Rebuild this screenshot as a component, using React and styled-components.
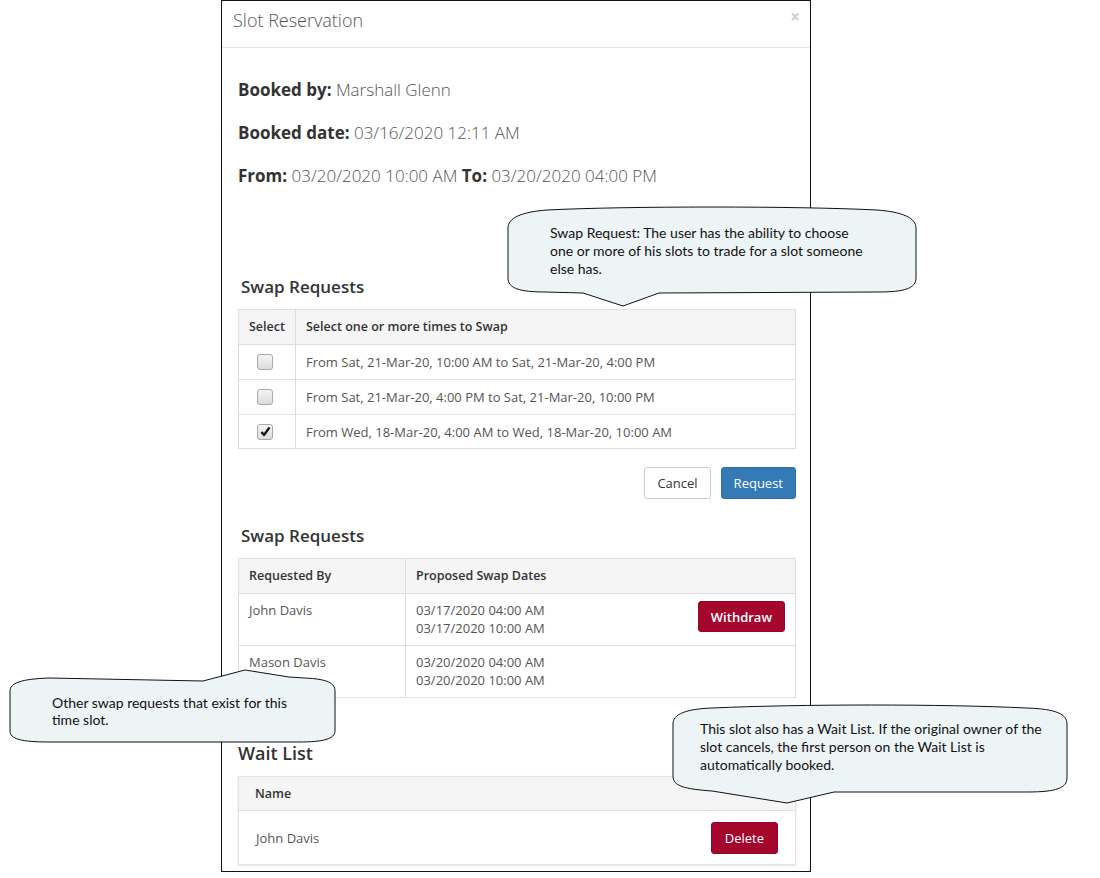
import React from "react";
import styled, { createGlobalStyle } from "styled-components";

const GlobalStyle = createGlobalStyle`
  html, body { margin: 0; padding: 0; background: #fff; }
  body { font-family: "Open Sans", "Liberation Sans", sans-serif; }
  * { box-sizing: border-box; }
`;

const Page = styled.div`
  position: relative;
  width: 1100px;
  height: 878px;
  overflow: hidden;
  background: #fff;
`;

const Modal = styled.div`
  margin-left: 221px;
  width: 590px;
  border: 1px solid #111;
  background: #fff;
`;

const Header = styled.div`
  display: flex;
  justify-content: space-between;
  align-items: flex-start;
  height: 47px;
  padding: 7px 10px 0 11px;
  border-bottom: 1px solid #e5e5e5;
`;

const Title = styled.h4`
  margin: 0;
  font-size: 18px;
  line-height: 24px;
  font-weight: 300;
  color: #555;
`;

const Close = styled.span`
  font-size: 17px;
  line-height: 1;
  font-weight: 700;
  color: #000;
  opacity: 0.2;
  margin-top: 0;
`;

const Body = styled.div`
  padding: 0 14px 6px 16px;
`;

const InfoList = styled.div`
  display: flex;
  flex-direction: column;
  gap: 21px;
  padding-top: 31px;
`;

const Info = styled.p`
  margin: 0;
  font-size: 17px;
  line-height: 22px;
  font-weight: 300;
  color: #555;
  b { font-weight: 700; color: #333; }
`;

const SectionTitle = styled.h3`
  margin: ${(p) => p.$mt}px 0 ${(p) => p.$mb || 11}px;
  padding-left: ${(p) => p.$indent || 0}px;
  font-size: ${(p) => p.$size || 17}px;
  line-height: 22px;
  font-weight: 600;
  color: #333;
`;

const DataTable = styled.div`
  border: 1px solid ${(p) => (p.$panel ? "#e3e3e3" : "#ddd")};
  box-shadow: ${(p) => (p.$panel ? "0 1px 2px rgba(0,0,0,0.12)" : "none")};
`;

const Row = styled.div`
  display: grid;
  grid-template-columns: ${(p) => p.$cols};
  min-height: ${(p) => p.$h}px;
  background: ${(p) => (p.$head ? "#f5f5f5" : "#fff")};
  & + & { border-top: 1px solid #ddd; }
`;

const Cell = styled.div`
  display: flex;
  align-items: ${(p) => (p.$top ? "flex-start" : "center")};
  justify-content: ${(p) => p.$justify || "flex-start"};
  padding: ${(p) => p.$pad || "0 10px"};
  font-size: ${(p) => (p.$head ? 12.5 : 13)}px;
  line-height: 18px;
  color: ${(p) => (p.$head ? "#333" : "#555")};
  font-weight: ${(p) => (p.$head ? 600 : 400)};
  border-left: ${(p) => (p.$divider ? "1px solid #ddd" : "none")};
`;

const Lines = styled.div`
  display: flex;
  flex-direction: column;
  flex: 1;
`;

const Box = styled.span`
  display: inline-flex;
  align-items: center;
  justify-content: center;
  width: 16px;
  height: 16px;
  margin-left: -4px;
  border: 1px solid #a9a9a9;
  border-radius: 3px;
  background: linear-gradient(#f4f4f4, #dcdcdc);
`;

const Actions = styled.div`
  display: flex;
  justify-content: flex-end;
  gap: 10px;
  margin-top: 18px;
`;

const Button = styled.button`
  height: ${(p) => p.$h || 32}px;
  padding: 0 ${(p) => p.$px || 12}px;
  font-family: "Open Sans", "Liberation Sans", sans-serif;
  font-size: 13px;
  border-radius: 3px;
  cursor: pointer;
  color: ${(p) => (p.$variant === "default" ? "#333" : "#fff")};
  background: ${(p) =>
    p.$variant === "primary" ? "#337ab7" : p.$variant === "danger" ? "#a5062d" : "#fff"};
  border: 1px solid
    ${(p) =>
      p.$variant === "primary" ? "#2e6da4" : p.$variant === "danger" ? "#96042a" : "#ccc"};
  font-weight: ${(p) => p.$weight || 400};
`;

const CalloutWrap = styled.div`
  position: absolute;
  left: ${(p) => p.$x}px;
  top: ${(p) => p.$y}px;
  width: ${(p) => p.$w}px;
  height: ${(p) => p.$h}px;
`;

const CalloutShape = styled.svg`
  position: absolute;
  inset: 0;
  overflow: visible;
`;

const CalloutText = styled.div`
  position: relative;
  padding: ${(p) => p.$pad};
  font-family: Lato, "Open Sans", sans-serif;
  font-size: ${(p) => p.$fs || 14}px;
  line-height: ${(p) => p.$lh || 18}px;
  color: #111;
  white-space: nowrap;
`;

function Callout({ x, y, w, h, d, pad, fs, lh, children }) {
  return (
    <CalloutWrap $x={x} $y={y} $w={w} $h={h}>
      <CalloutShape width={w} height={h} viewBox={`0 0 ${w} ${h}`}>
        <path d={d} fill="#edf4f6" stroke="#111" strokeWidth="1" />
      </CalloutShape>
      <CalloutText $pad={pad} $fs={fs} $lh={lh}>
        {children}
      </CalloutText>
    </CalloutWrap>
  );
}

function Check({ checked }) {
  return (
    <Box>
      {checked && (
        <svg width="11" height="11" viewBox="0 0 11 11">
          <path d="M1.5 6 L4 9 L9.5 1.5" fill="none" stroke="#111" strokeWidth="2.2" strokeLinejoin="round" />
        </svg>
      )}
    </Box>
  );
}

const slots = [
  { text: "From Sat, 21-Mar-20, 10:00 AM to Sat, 21-Mar-20, 4:00 PM", checked: false, h: 35 },
  { text: "From Sat, 21-Mar-20, 4:00 PM to Sat, 21-Mar-20, 10:00 PM", checked: false, h: 35 },
  { text: "From Wed, 18-Mar-20, 4:00 AM to Wed, 18-Mar-20, 10:00 AM", checked: true, h: 34 },
];

const requests = [
  { name: "John Davis", dates: ["03/17/2020 04:00 AM", "03/17/2020 10:00 AM"], withdraw: true, h: 51 },
  { name: "Mason Davis", dates: ["03/20/2020 04:00 AM", "03/20/2020 10:00 AM"], withdraw: false, h: 52 },
];

export default function App() {
  return (
    <Page>
      <GlobalStyle />
      <Modal>
        <Header>
          <Title>Slot Reservation</Title>
          <Close>×</Close>
        </Header>
        <Body>
          <InfoList>
            <Info><b>Booked by:</b> Marshall Glenn</Info>
            <Info><b>Booked date:</b> 03/16/2020 12:11 AM</Info>
            <Info><b>From:</b> 03/20/2020 10:00 AM <b>To:</b> 03/20/2020 04:00 PM</Info>
          </InfoList>

          <SectionTitle $mt={89} $indent={3}>Swap Requests</SectionTitle>
          <DataTable>
            <Row $cols="56px 1fr" $h={34} $head>
              <Cell $head>Select</Cell>
              <Cell $head $divider>Select one or more times to Swap</Cell>
            </Row>
            {slots.map((s) => (
              <Row key={s.text} $cols="56px 1fr" $h={s.h}>
                <Cell $justify="center"><Check checked={s.checked} /></Cell>
                <Cell $divider>{s.text}</Cell>
              </Row>
            ))}
          </DataTable>
          <Actions>
            <Button $variant="default" $px={12}>Cancel</Button>
            <Button $variant="primary" $px={12}>Request</Button>
          </Actions>

          <SectionTitle $mt={26} $indent={3}>Swap Requests</SectionTitle>
          <DataTable>
            <Row $cols="166px 1fr" $h={34} $head>
              <Cell $head>Requested By</Cell>
              <Cell $head $divider>Proposed Swap Dates</Cell>
            </Row>
            {requests.map((r) => (
              <Row key={r.name} $cols="166px 1fr" $h={r.h}>
                <Cell $top $pad="7px 10px 8px">{r.name}</Cell>
                <Cell $top $divider $pad="7px 10px 8px">
                  <Lines>
                    {r.dates.map((d) => (
                      <span key={d}>{d}</span>
                    ))}
                  </Lines>
                  {r.withdraw && (
                    <Button $variant="danger" $h={31} $px={12} $weight={600}>Withdraw</Button>
                  )}
                </Cell>
              </Row>
            ))}
          </DataTable>

          <SectionTitle $mt={44} $mb={12} $size={18}>Wait List</SectionTitle>
          <DataTable $panel>
            <Row $cols="1fr" $h={33} $head>
              <Cell $head $pad="0 16px">Name</Cell>
            </Row>
            <Row $cols="1fr" $h={54}>
              <Cell $justify="space-between" $pad="0 17px 0 17px">
                <span>John Davis</span>
                <Button $variant="danger" $px={13}>Delete</Button>
              </Cell>
            </Row>
          </DataTable>
        </Body>
      </Modal>

      <Callout
        x={507}
        y={206}
        w={410}
        h={101}
        pad="18px 0 0 43px"
        d="M1,22 C1,12 14,6 40,4 C120,0 290,0 370,4 C396,6 409,12 409,22 L409,72 C409,82 398,86 372,86 L152,87 L116,100 L76,87 L38,86 C12,86 1,82 1,72 Z"
      >
        Swap Request: The user has the ability to choose
        <br />
        one or more of his slots to trade for a slot someone
        <br />
        else has.
      </Callout>

      <Callout
        x={9}
        y={669}
        w={328}
        h={75}
        pad="25px 0 0 43px"
        lh={17}
        d="M1,22 C1,14 12,10 40,9 L194,12 L236,1 L280,8 L296,9 C318,10 326,14 326,22 L326,62 C326,70 314,73 290,73 L40,73 C12,73 1,70 1,62 Z"
      >
        Other swap requests that exist for this
        <br />
        time slot.
      </Callout>

      <Callout
        x={672}
        y={704}
        w={397}
        h={101}
        pad="16px 0 0 28px"
        d="M1,20 C1,10 14,5 40,4 C130,0 270,0 355,4 C384,5 395,10 395,20 L395,74 C395,84 384,88 356,88 L162,88 L115,99 L40,87 C12,85 1,82 1,72 Z"
      >
        This slot also has a Wait List. If the original owner of the
        <br />
        slot cancels, the first person on the Wait List is
        <br />
        automatically booked.
      </Callout>
    </Page>
  );
}
